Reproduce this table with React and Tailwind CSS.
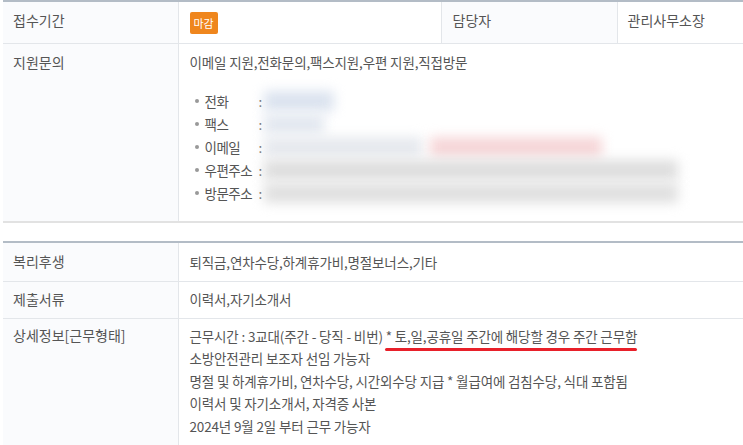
import React from "react";

const font = { fontFamily: '"Noto Sans CJK KR", "Noto Sans", sans-serif' };

const contacts = [
  { label: "전화", blur: [{ w: "w-[70px]", c: "bg-[#dbe3ef]" }] },
  { label: "팩스", blur: [{ w: "w-[60px]", c: "bg-[#e3e8f0]" }] },
  {
    label: "이메일",
    blur: [
      { w: "w-[158px]", c: "bg-[#e6e9ee]" },
      { w: "w-[172px]", c: "bg-[#f6d6d8]" },
    ],
  },
  { label: "우편주소", blur: [{ w: "w-[414px]", c: "bg-[#dedede]" }] },
  { label: "방문주소", blur: [{ w: "w-[414px]", c: "bg-[#e0e0e0]" }] },
];

const details = [
  "소방안전관리 보조자 선임 가능자",
  "명절 및 하계휴가비, 연차수당, 시간외수당 지급 * 월급여에 검침수당, 식대 포함됨",
  "이력서 및 자기소개서, 자격증 사본",
  "2024년 9월 2일 부터 근무 가능자",
];

const Label = ({ children, className = "" }) => (
  <td className={`w-[175px] bg-[#fafbfd] border-r border-[#e3e6ea] pl-[10px] ${className}`}>
    {children}
  </td>
);

export default function App() {
  return (
    <div className="bg-white w-[743px] h-[445px] overflow-hidden pl-[3px] text-[#555] text-[14px]" style={font}>
      <table className="w-full border-collapse border-t-2 border-t-[#b3bcc6] border-b-2 border-b-[#e2e2e2]">
        <tbody>
          <tr className="h-[42px] border-b border-[#e3e6ea]">
            <Label className="align-top pt-[8px]">접수기간</Label>
            <td className="w-[263px] pl-[11px] align-top pt-[10px]">
              <span className="inline-block bg-[#ef861d] text-white text-[11px] leading-[22px] px-[4px] rounded-[2px]">마감</span>
            </td>
            <td className="w-[176px] bg-[#fafbfd] border-x border-[#e3e6ea] pl-[11px] align-top pt-[8px]">담당자</td>
            <td className="pl-[10px] align-top pt-[8px]">관리사무소장</td>
          </tr>
          <tr className="h-[179px]">
            <Label className="align-top pt-[8px]">지원문의</Label>
            <td colSpan={3} className="pl-[11px] align-top pt-[8px] tracking-[-0.15px] text-[13.5px]">
              <div>이메일 지원,전화문의,팩스지원,우편 지원,직접방문</div>
              <ul className="mt-[18px] pl-[5px]">
                {contacts.map((c) => (
                  <li key={c.label} className="flex items-center h-[23px]">
                    <span className="w-[4px] h-[4px] rounded-full bg-[#999] mr-[6px]" />
                    <span className="w-[54px] tracking-[-0.5px]">{c.label}</span>
                    <span>:</span>
                    <span className="flex items-center gap-[8px] ml-[2px]">
                      {c.blur.map((b, i) => (
                        <span key={i} className={`${b.w} ${b.c} h-[20px] blur-[6px]`} />
                      ))}
                    </span>
                  </li>
                ))}
              </ul>
            </td>
          </tr>
        </tbody>
      </table>

      <table className="w-full border-collapse border-t-2 border-t-[#b3bcc6] mt-[18px]">
        <tbody>
          <tr className="h-[39px] border-b border-[#e3e6ea]">
            <Label className="align-middle">복리후생</Label>
            <td className="pl-[11px] tracking-[-0.15px] text-[13.5px]">퇴직금,연차수당,하계휴가비,명절보너스,기타</td>
          </tr>
          <tr className="h-[37px] border-b border-[#e3e6ea]">
            <Label className="align-middle">제출서류</Label>
            <td className="pl-[11px] tracking-[-0.15px] text-[13.5px]">이력서,자기소개서</td>
          </tr>
          <tr className="h-[130px]">
            <Label className="align-top pt-[6px]">상세정보[근무형태]</Label>
            <td className="pl-[11px] pt-[6px] align-top tracking-[-0.15px] text-[13.5px] leading-[22.5px]">
              <div>
                근무시간 : 3교대(주간 - 당직 - 비번){" "}
                <span className="relative">
                  * 토,일,공휴일 주간에 해당할 경우 주간 근무함
                  <span className="absolute left-[-1px] right-0 top-[22px] h-[3px] rounded-full bg-[#e8202a]" />
                </span>
              </div>
              {details.map((d) => (
                <div key={d}>{d}</div>
              ))}
            </td>
          </tr>
        </tbody>
      </table>
    </div>
  );
}
